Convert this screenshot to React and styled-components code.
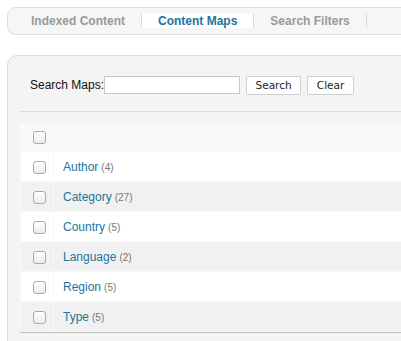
import React from "react";
import styled, { createGlobalStyle } from "styled-components";

const GlobalStyle = createGlobalStyle`
  html, body {
    margin: 0;
    padding: 0;
    background: #fff;
    overflow: hidden;
  }
  body {
    font-family: "Liberation Sans", Arial, sans-serif;
    font-size: 12px;
    color: #333;
  }
`;

const Page = styled.div`
  box-sizing: border-box;
  width: 401px;
  height: 341px;
  padding: 7px 0 0 7px;
  overflow: hidden;
`;

const Frame = styled.div`
  width: 520px;
`;

const TabBar = styled.ul`
  display: flex;
  align-items: center;
  height: 26px;
  margin: 0;
  padding: 0 0 0 7px;
  list-style: none;
  background: #f6f6f6;
  border: 1px solid #dcdcdc;
  border-radius: 9px;
`;

const Tab = styled.li`
  height: 14px;
  line-height: 14px;
  padding: 0 16px;
  border-right: 1px solid #dadada;
  font-weight: bold;
  font-size: 12px;
  color: ${(p) => (p.$active ? "#21759b" : "#999")};
  background: ${(p) => (p.$active ? "#fff" : "transparent")};
  white-space: nowrap;
`;

const Panel = styled.div`
  margin-top: 20px;
  padding: 20px 0 10px 12px;
  background: #f4f4f4;
  border: 1px solid #dcdcdc;
  border-radius: 10px 0 0 0;
`;

const SearchForm = styled.form`
  display: flex;
  align-items: center;
  height: 18px;
  padding-left: 10px;
`;

const Label = styled.label`
  font-size: 12px;
  color: #111;
`;

const SearchInput = styled.input`
  box-sizing: border-box;
  width: 136px;
  height: 18px;
  margin: 0 6px 0 0;
  padding: 0 3px;
  border: 1px solid #c8c8c8;
  background: #fff;
  outline: none;
`;

const Button = styled.button`
  box-sizing: border-box;
  width: ${(p) => p.$w}px;
  height: 19px;
  margin: 0 6px 0 0;
  padding: 0;
  border: 1px solid #cfcfcf;
  border-radius: 1px;
  background: #fff;
  font-family: "DejaVu Sans", Verdana, sans-serif;
  font-size: 10.5px;
  color: #222;
`;

const Divider = styled.div`
  height: 1px;
  margin-top: 17px;
  background: #dcdcdc;
`;

const Table = styled.table`
  width: 100%;
  margin-top: 11px;
  border-collapse: separate;
  border-spacing: 1px;
  background: #f8f8f8;
  border-bottom: 1px solid #bdbdbd;
`;

const HeadCell = styled.th`
  height: 27px;
  padding: 0;
  background: #f9f9f9;
  text-align: left;
  width: ${(p) => (p.$check ? "32px" : "auto")};
`;

const Row = styled.tr`
  background: ${(p) => (p.$alt ? "#f1f1f1" : "#fff")};
`;

const Cell = styled.td`
  height: 28px;
  padding: ${(p) => (p.$check ? "1px 0 0 12px" : "1px 0 0 9px")};
  width: ${(p) => (p.$check ? "20px" : "auto")};
  vertical-align: middle;
`;

const Check = styled.span`
  display: block;
  box-sizing: border-box;
  width: 13px;
  height: 13px;
  margin-left: ${(p) => (p.$head ? "12px" : "0")};
  border: 1px solid #a9a9a9;
  border-radius: 3px;
  background: linear-gradient(#fff, #ececec);
`;

const Name = styled.a`
  color: #21759b;
  font-size: 12px;
  text-decoration: none;
`;

const Count = styled.span`
  margin-left: 3px;
  font-size: 10px;
  color: #777;
`;

const maps = [
  { name: "Author", count: 4 },
  { name: "Category", count: 27 },
  { name: "Country", count: 5 },
  { name: "Language", count: 2 },
  { name: "Region", count: 5 },
  { name: "Type", count: 5 },
];

export default function App() {
  return (
    <Page>
      <GlobalStyle />
      <Frame>
        <TabBar>
          <Tab>Indexed Content</Tab>
          <Tab $active>Content Maps</Tab>
          <Tab>Search Filters</Tab>
        </TabBar>
        <Panel>
          <SearchForm onSubmit={(e) => e.preventDefault()}>
            <Label>Search Maps:</Label>
            <SearchInput type="text" />
            <Button $w={55}>Search</Button>
            <Button $w={47}>Clear</Button>
          </SearchForm>
          <Divider />
          <Table>
            <thead>
              <tr>
                <HeadCell $check>
                  <Check $head />
                </HeadCell>
                <HeadCell />
              </tr>
            </thead>
            <tbody>
              {maps.map((m, i) => (
                <Row key={m.name} $alt={i % 2 === 1}>
                  <Cell $check>
                    <Check />
                  </Cell>
                  <Cell>
                    <Name href="#">{m.name}</Name>
                    <Count>({m.count})</Count>
                  </Cell>
                </Row>
              ))}
            </tbody>
          </Table>
        </Panel>
      </Frame>
    </Page>
  );
}
